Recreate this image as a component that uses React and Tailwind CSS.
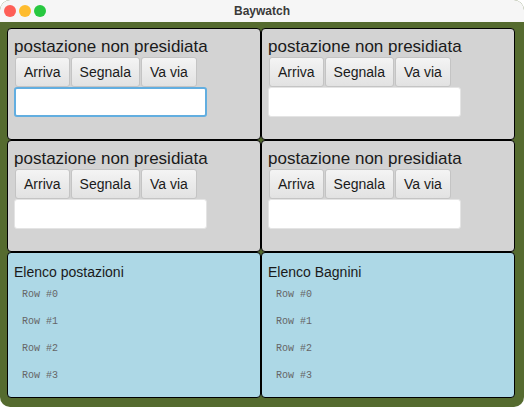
const SANS = { fontFamily: '"Liberation Sans", Arial, sans-serif' };

function Postazione({ focused }) {
  return (
    <div className="flex flex-col bg-[#d3d3d3] border border-black rounded-[4px] pl-[6px] pt-[8px]" style={SANS}>
      <div className="text-[17px] leading-[20px] text-[#1a1a1a]">postazione non presidiata</div>
      <div className="flex gap-[1px] pl-[1px]">
        {['Arriva', 'Segnala', 'Va via'].map((label) => (
          <button
            key={label}
            className="h-[30px] px-[8px] text-[14px] text-[#1a1a1a] rounded-[3px] border border-[#c4c4c4] bg-gradient-to-b from-[#f4f4f4] to-[#e2e2e2]"
          >
            {label}
          </button>
        ))}
      </div>
      <div
        className={
          focused
            ? 'w-[193px] h-[30px] bg-white rounded-[3px] border-2 border-[#62aee0]'
            : 'w-[193px] h-[30px] bg-white rounded-[3px] border border-[#e4e4e4]'
        }
      />
    </div>
  );
}

function Elenco({ title }) {
  return (
    <div className="flex flex-col bg-[#add8e6] border border-black rounded-[4px] pl-[6px] pt-[10px]" style={SANS}>
      <div className="text-[14px] leading-[18px] text-[#1a1a1a]">{title}</div>
      <div className="flex flex-col pl-[8px]">
        {[0, 1, 2, 3].map((i) => (
          <div
            key={i}
            className="h-[27px] flex items-center text-[10px] text-[#666666]"
            style={{ fontFamily: '"Liberation Mono", "Courier New", monospace' }}
          >
            Row #{i}
          </div>
        ))}
      </div>
    </div>
  );
}

export default function App() {
  return (
    <div className="w-[524px] h-[407px] bg-white">
      <div className="w-full h-full flex flex-col rounded-[10px] overflow-hidden bg-[#556b2f]">
        <div className="h-[22px] flex items-center relative bg-[#f6f6f6] shrink-0">
          <div className="flex gap-[3px] pl-[4px]">
            <span className="w-[12px] h-[12px] rounded-full bg-[#fe5f57]" />
            <span className="w-[12px] h-[12px] rounded-full bg-[#febc2e]" />
            <span className="w-[12px] h-[12px] rounded-full bg-[#28c840]" />
          </div>
          <div className="absolute inset-0 flex items-center justify-center text-[12px] font-bold text-[#3a3a3a]" style={SANS}>
            Baywatch
          </div>
        </div>
        <div className="flex-1 grid grid-cols-2 grid-rows-[112px_112px_1fr] pl-[7px] pr-[9px] pt-[6px] pb-[9px]">
          <Postazione focused />
          <Postazione />
          <Postazione />
          <Postazione />
          <Elenco title="Elenco postazioni" />
          <Elenco title="Elenco Bagnini" />
        </div>
      </div>
    </div>
  );
}
